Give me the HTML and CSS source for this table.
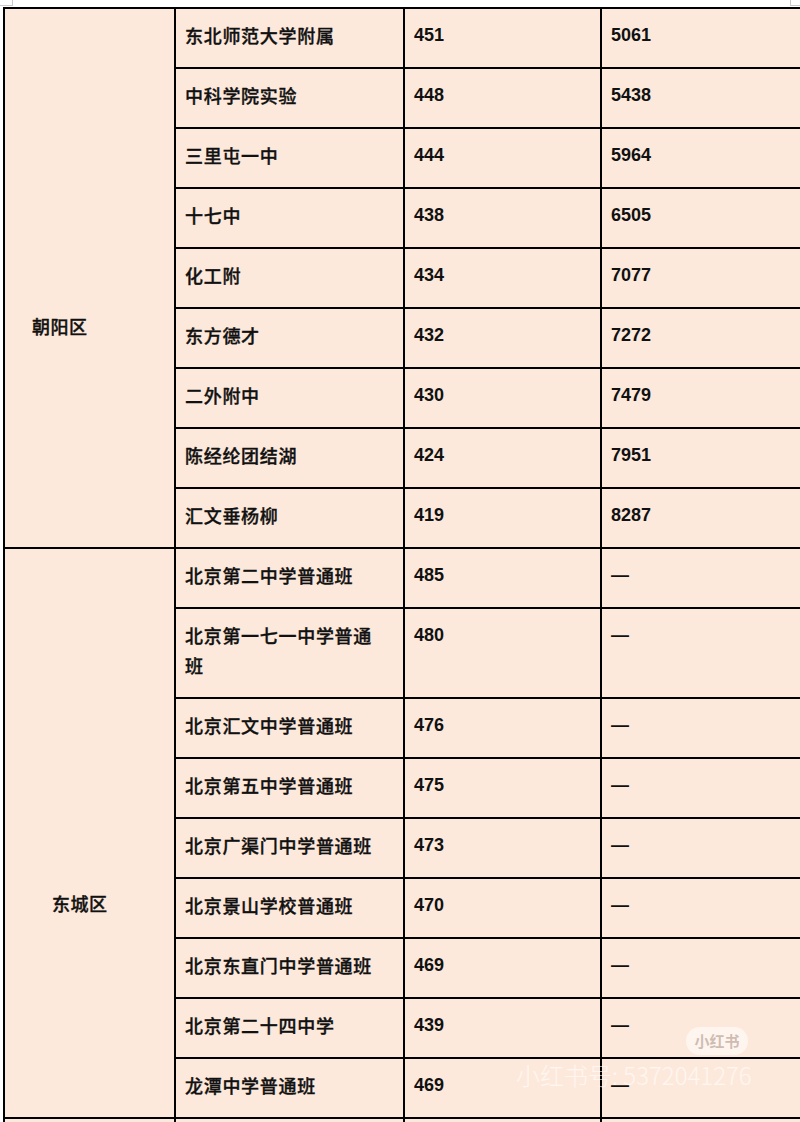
FILE: index.html
```html
<!DOCTYPE html>
<html lang="zh-CN">
<head>
<meta charset="utf-8">
<title>分数线</title>
<link rel="stylesheet" href="styles.css">
</head>
<body>
<div class="page">
  <span class="corner corner-left"></span>
  <span class="corner corner-right"></span>
  <table class="scores">
    <colgroup>
      <col class="c-district">
      <col class="c-school">
      <col class="c-score">
      <col class="c-rank">
    </colgroup>
    <tbody>
      <tr>
        <td rowspan="9" class="district district-chaoyang">朝阳区</td>
        <td class="school">东北师范大学附属</td>
        <td class="num">451</td>
        <td class="num">5061</td>
      </tr>
      <tr><td class="school">中科学院实验</td><td class="num">448</td><td class="num">5438</td></tr>
      <tr><td class="school">三里屯一中</td><td class="num">444</td><td class="num">5964</td></tr>
      <tr><td class="school">十七中</td><td class="num">438</td><td class="num">6505</td></tr>
      <tr><td class="school">化工附</td><td class="num">434</td><td class="num">7077</td></tr>
      <tr><td class="school">东方德才</td><td class="num">432</td><td class="num">7272</td></tr>
      <tr><td class="school">二外附中</td><td class="num">430</td><td class="num">7479</td></tr>
      <tr><td class="school">陈经纶团结湖</td><td class="num">424</td><td class="num">7951</td></tr>
      <tr><td class="school">汇文垂杨柳</td><td class="num">419</td><td class="num">8287</td></tr>
      <tr>
        <td rowspan="9" class="district district-dongcheng">东城区</td>
        <td class="school">北京第二中学普通班</td>
        <td class="num">485</td>
        <td class="num">—</td>
      </tr>
      <tr><td class="school">北京第一七一中学普通班</td><td class="num">480</td><td class="num">—</td></tr>
      <tr><td class="school">北京汇文中学普通班</td><td class="num">476</td><td class="num">—</td></tr>
      <tr><td class="school">北京第五中学普通班</td><td class="num">475</td><td class="num">—</td></tr>
      <tr><td class="school">北京广渠门中学普通班</td><td class="num">473</td><td class="num">—</td></tr>
      <tr><td class="school">北京景山学校普通班</td><td class="num">470</td><td class="num">—</td></tr>
      <tr><td class="school">北京东直门中学普通班</td><td class="num">469</td><td class="num">—</td></tr>
      <tr><td class="school">北京第二十四中学</td><td class="num">439</td><td class="num">—</td></tr>
      <tr><td class="school">龙潭中学普通班</td><td class="num">469</td><td class="num">—</td></tr>
      <tr><td class="district"></td><td class="school"></td><td class="num"></td><td class="num"></td></tr>
    </tbody>
  </table>
  <div class="badge">小红书</div>
  <div class="watermark">小红书号: 5372041276</div>
</div>
</body>
</html>
```

FILE: styles.css
```css
html, body {
  margin: 0;
  padding: 0;
  background: #ffffff;
}

.page {
  position: relative;
  width: 800px;
  height: 1122px;
  overflow: hidden;
  padding: 7px 0 0 3px;
  box-sizing: border-box;
}

.corner {
  position: absolute;
  top: 0;
  width: 12px;
  height: 5px;
  border-bottom: 1px solid #c9c9c9;
}

.corner-left {
  left: 0;
  border-right: 1px solid #c9c9c9;
}

.corner-right {
  left: 790px;
  border-left: 1px solid #c9c9c9;
}

.scores {
  border-collapse: separate;
  border-spacing: 0;
  table-layout: fixed;
  width: 829px;
  background: #fde9dc;
  border-top: 2px solid #000;
  border-left: 2px solid #000;
  font-family: "Noto Sans CJK SC", "Liberation Sans", sans-serif;
  color: #111;
}

.c-district { width: 171px; }
.c-school { width: 229px; }
.c-score { width: 197px; }
.c-rank { width: 230px; }

.scores td {
  border-right: 2px solid #000;
  border-bottom: 2px solid #000;
  vertical-align: top;
  padding: 11px 20px 17px 9px;
  font-size: 18px;
  line-height: 30px;
  height: 30px;
}

.school {
  font-weight: 500;
  letter-spacing: 0.7px;
  -webkit-text-stroke: 0.35px #111;
}

.num {
  font-family: "Liberation Sans", Arial, sans-serif;
  font-weight: 700;
}

.district {
  font-weight: 500;
  letter-spacing: 0.5px;
  -webkit-text-stroke: 0.35px #111;
}

.scores td.district-chaoyang {
  padding-top: 302px;
  padding-left: 27px;
}

.scores td.district-dongcheng {
  padding-top: 339px;
  padding-left: 47px;
}

.badge {
  position: absolute;
  left: 686px;
  top: 1027px;
  width: 62px;
  height: 28px;
  border-radius: 14px;
  background: rgba(255, 255, 255, 0.55);
  color: rgba(190, 170, 160, 0.75);
  font-family: "Noto Sans CJK SC", sans-serif;
  font-weight: 700;
  font-size: 15px;
  line-height: 28px;
  text-align: center;
}

.watermark {
  position: absolute;
  left: 516px;
  top: 1059px;
  color: rgba(255, 255, 255, 0.6);
  font-family: "Noto Sans CJK SC", sans-serif;
  font-weight: 300;
  font-size: 24px;
  line-height: 32px;
  white-space: nowrap;
}
```
